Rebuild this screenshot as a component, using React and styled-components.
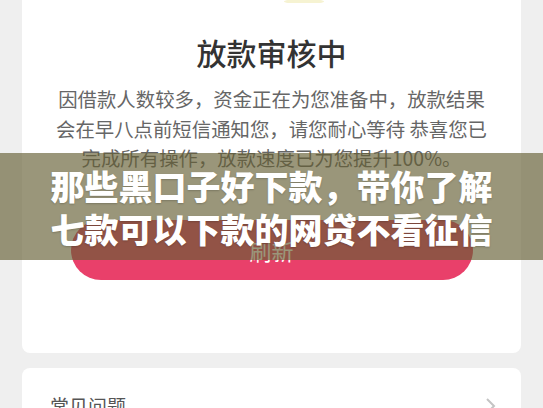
import React from 'react'
import styled, { createGlobalStyle } from 'styled-components'

const GlobalStyle = createGlobalStyle`
  html, body {
    margin: 0;
    padding: 0;
    background: #efefef;
    font-family: "Noto Sans CJK SC", "Noto Sans", sans-serif;
    overflow: hidden;
  }
`

const App = () => {
  return (
    <Screen>
      <GlobalStyle />
      <Page>
        <StatusCard>
          <Illustration>
            <svg width="160" height="63" viewBox="0 0 160 63">
              <ellipse cx="112" cy="61.5" rx="20" ry="2.5" fill="#f6f3d2" />
            </svg>
          </Illustration>
          <Title>放款审核中</Title>
          <Notice>
            因借款人数较多，资金正在为您准备中，放款结果
            <br />
            会在早八点前短信通知您，请您耐心等待 恭喜您已
            <br />
            完成所有操作，放款速度已为您提升100%。
          </Notice>
          <RefreshButton>刷新</RefreshButton>
        </StatusCard>
        <FaqCard>
          <FaqLabel>常见问题</FaqLabel>
          <svg width="12" height="18" viewBox="0 0 12 18">
            <path d="M2 2 L9 9 L2 16" fill="none" stroke="#c4c4c4" strokeWidth="2" />
          </svg>
        </FaqCard>
      </Page>
      <Banner>
        <BannerLine>那些黑口子好下款，带你了解</BannerLine>
        <BannerLine>七款可以下款的网贷不看征信</BannerLine>
      </Banner>
    </Screen>
  )
}

export default App

const Screen = styled.div`
  position: relative;
  width: 543px;
  height: 408px;
  overflow: hidden;
  background: #efefef;
`

const Page = styled.div`
  display: flex;
  flex-direction: column;
  gap: 15px;
  padding: 0 22px;
  margin-top: -60px;
`

const StatusCard = styled.div`
  display: flex;
  flex-direction: column;
  align-items: center;
  background: #fff;
  border-radius: 8px;
  padding: 0 20px 73px;
`

const Illustration = styled.div`
  display: flex;
  justify-content: center;
  height: 63px;

  svg {
    display: block;
  }
`

const Title = styled.h1`
  margin: 29px 0 0;
  font-size: 30px;
  line-height: 40px;
  font-weight: 500;
  color: #333;
`

const Notice = styled.p`
  margin: 12px 0 0;
  font-size: 19.4px;
  line-height: 29.5px;
  color: #666;
  text-align: center;
  white-space: nowrap;
`

const RefreshButton = styled.div`
  display: flex;
  align-items: center;
  justify-content: center;
  margin-top: 47px;
  width: 402px;
  height: 60px;
  border-radius: 30px;
  background: #e9406a;
  color: #fff;
  font-size: 22px;
`

const FaqCard = styled.div`
  display: flex;
  align-items: center;
  justify-content: space-between;
  background: #fff;
  border-radius: 8px;
  padding: 25px 24px 25px 28px;
`

const FaqLabel = styled.span`
  font-size: 19px;
  line-height: 26px;
  color: #555;
`

const Banner = styled.div`
  position: absolute;
  left: 0;
  right: 0;
  top: 153px;
  height: 107px;
  display: flex;
  flex-direction: column;
  align-items: center;
  justify-content: center;
  background: rgba(100, 94, 50, 0.65);
`

const BannerLine = styled.div`
  color: #fff;
  font-size: 34px;
  line-height: 43px;
  font-weight: 900;
  white-space: nowrap;
  text-shadow: 0 1px 2px rgba(0, 0, 0, 0.2);
`
